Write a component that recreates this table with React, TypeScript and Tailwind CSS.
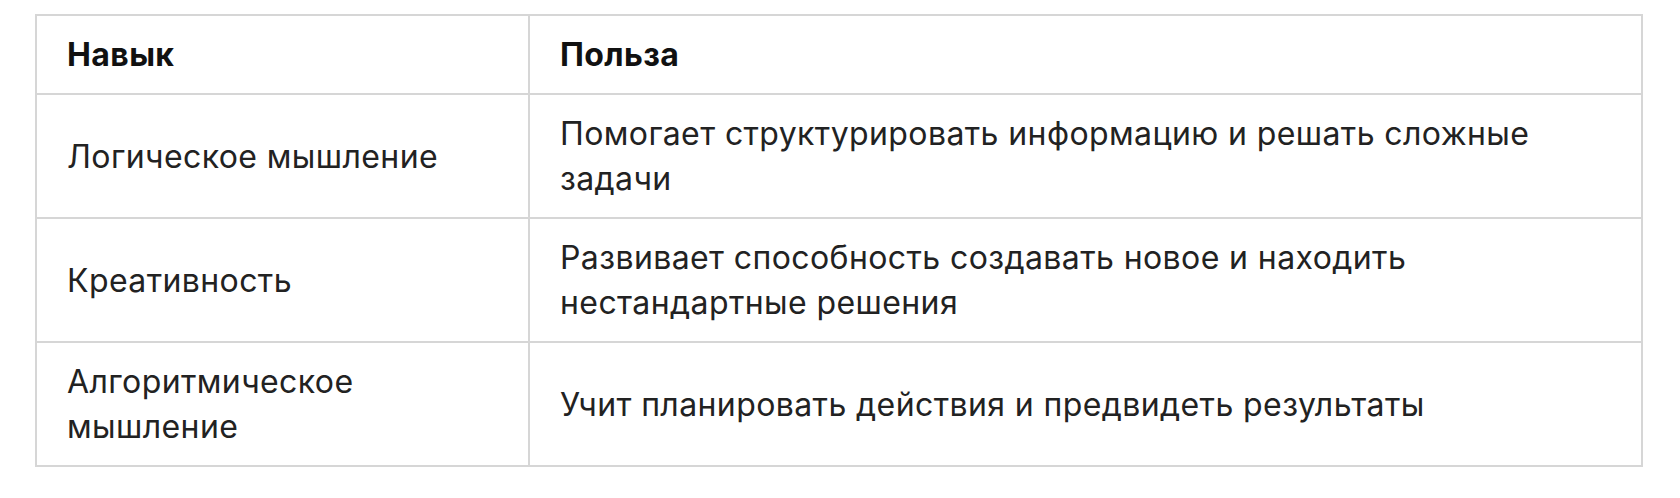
import React from "react";

const rows: [string, string][] = [
  ["Логическое мышление", "Помогает структурировать информацию и решать сложные задачи"],
  ["Креативность", "Развивает способность создавать новое и находить нестандартные решения"],
  ["Алгоритмическое мышление", "Учит планировать действия и предвидеть результаты"],
];

export default function App() {
  return (
    <div
      className="bg-white w-[1680px] h-[498px] pl-[35px] pt-[14px]"
      style={{ fontFamily: "Inter, 'Noto Sans', sans-serif" }}
    >
      <table className="border-collapse w-[1608px] text-[32px] leading-[45px] tracking-[0.4px] text-[#222222]">
        <colgroup>
          <col className="w-[493px]" />
          <col />
        </colgroup>
        <thead>
          <tr>
            <th className="border-2 border-[#d6d6d6] text-left font-bold text-[#111] px-[30px] py-[16px]">Навык</th>
            <th className="border-2 border-[#d6d6d6] text-left font-bold text-[#111] px-[30px] py-[16px]">Польза</th>
          </tr>
        </thead>
        <tbody>
          {rows.map(([a, b]) => (
            <tr key={a}>
              <td className="border-2 border-[#d6d6d6] px-[30px] py-[16px] align-middle">{a}</td>
              <td className="border-2 border-[#d6d6d6] px-[30px] py-[16px] align-middle">{b}</td>
            </tr>
          ))}
        </tbody>
      </table>
    </div>
  );
}
